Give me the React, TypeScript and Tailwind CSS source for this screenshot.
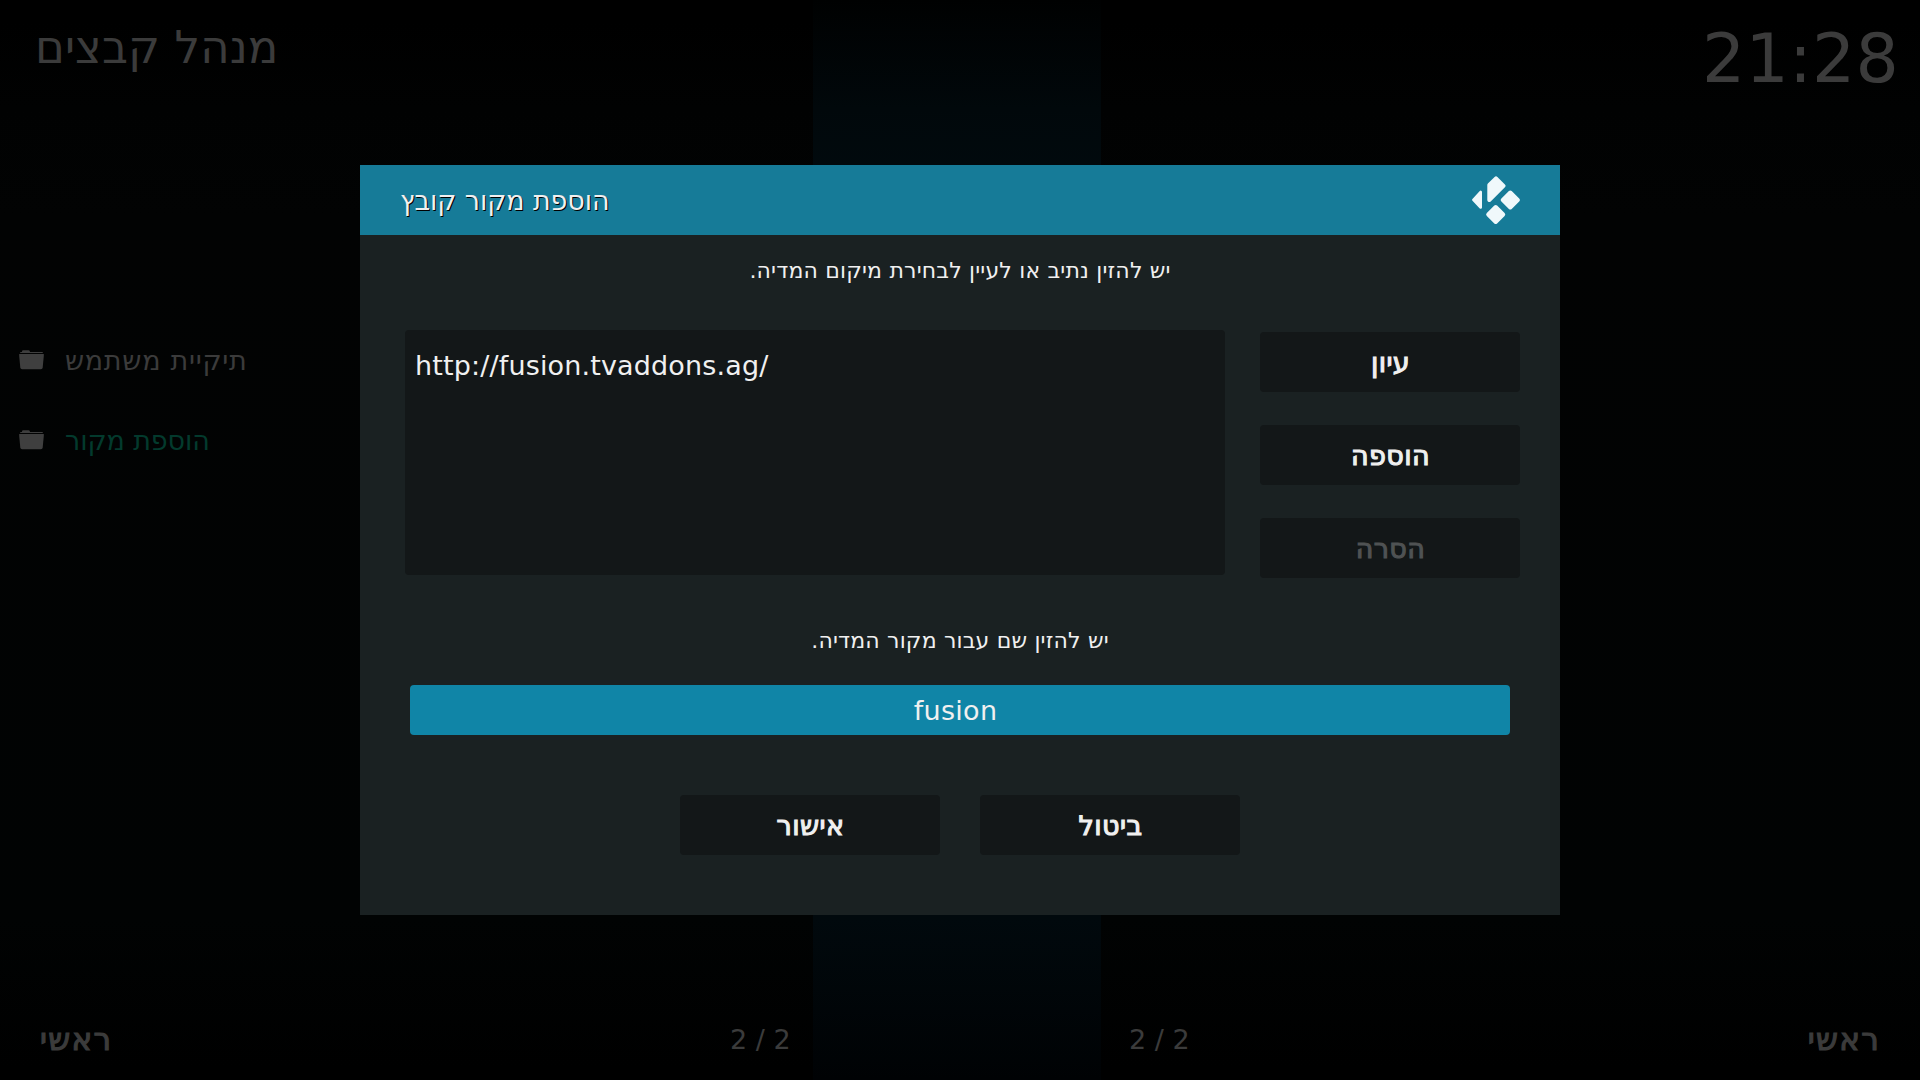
import type { ReactNode } from "react";

function Folder() {
  return (
    <svg width="25" height="20" viewBox="0 0 25 20" fill="#3f3f3f" className="shrink-0">
      <path d="M3 1.600Q3 .3 4.300 .3H9.500Q10.600 .3 10.900 1.600L11 2.100H23Q24 2.100 24 3H1Q1 2.100 2 2.100H3Z" />
      <path d="M.2 4H24.800V6L23.700 17.600Q23.500 19.200 22 19.200H3Q1.500 19.200 1.300 17.600L.2 6Z" />
    </svg>
  );
}

function KodiLogo() {
  return (
    <svg width="48" height="49" viewBox="0 0.5 48 49" fill="#f0f8fb" stroke="#f0f8fb" strokeWidth="4" strokeLinejoin="round" className="shrink-0">
      <path d="M24 2.800L31.500 10.300L17.300 24.500V9.500Z" />
      <path d="M38.300 17L45.800 24.500L38.300 32L30.800 24.500Z" />
      <path d="M23.700 31.500L31.200 39L23.700 46.500L16.200 39Z" />
      <path d="M8.700 16.500V32L1.400 24.300Z" strokeWidth="2.600" />
    </svg>
  );
}

function Button({ children, disabled }: { children: ReactNode; disabled?: boolean }) {
  return (
    <button
      dir="rtl"
      className={
        "flex h-[60px] w-[260px] items-center justify-center rounded bg-[#131718] pl-px text-[27px] tracking-[0.4px] [-webkit-text-stroke:1.1px] " +
        (disabled ? "text-[#4f5253]" : "text-[#f0f0f0]")
      }
    >
      {children}
    </button>
  );
}

export default function App() {
  return (
    <div className="relative h-[1080px] w-[1920px] overflow-hidden bg-black bg-[linear-gradient(to_bottom,#000000_2%,#010202_10%,#020303_20%,#010303_85%,#000000_99%)] font-['DejaVu_Sans',sans-serif] leading-none whitespace-nowrap text-[#3b3b3b]">
      <div className="absolute top-0 left-[813px] h-full w-[288px] bg-[linear-gradient(to_bottom,#000101_0%,#01080b_10%,#010b0f_20%,#01090d_85%,#000204_100%)]" />

      <div className="relative flex h-full flex-col justify-between">
        <header className="flex h-[119px] items-center justify-between pr-[21px] pl-[35px]">
          <h1 dir="rtl" className="mb-[24px] text-[45px] tracking-[0.1px]">מנהל קבצים</h1>
          <time className="mb-[2px] text-[68px] tracking-[0.2px]">21:28</time>
        </header>

        <ul className="mt-[201px] w-[360px] flex-1 text-[27px]">
          <li className="flex h-20 items-center gap-[21px] pl-[19px]">
            <Folder />
            <span dir="rtl" className="tracking-[0.7px]">תיקיית משתמש</span>
          </li>
          <li className="flex h-20 items-center gap-[21px] pl-[19px]">
            <Folder />
            <span dir="rtl" className="tracking-[-0.1px] text-[#033a2d]">הוספת מקור</span>
          </li>
        </ul>

        <footer className="flex h-20 items-center px-10 pb-[2px]">
          <span dir="rtl" className="w-[690px] text-left text-[31px] tracking-[1.3px] [-webkit-text-stroke:1.2px]">ראשי</span>
          <span className="w-[399px] text-[27px]">2 / 2</span>
          <span className="text-[27px]">2 / 2</span>
          <span dir="rtl" className="flex-1 text-[31px] tracking-[1.3px] [-webkit-text-stroke:1.2px]">ראשי</span>
        </footer>
      </div>

      <section className="absolute top-[165px] left-[360px] flex h-[750px] w-[1200px] flex-col bg-[#1a2122] text-[#f0f0f0]">
        <header className="flex h-[70px] shrink-0 items-center justify-between bg-[#167b98] px-10">
          <h2 dir="rtl" className="text-[27px] tracking-[-0.1px] [text-shadow:1px_1px_0_#000]">הוספת מקור קובץ</h2>
          <KodiLogo />
        </header>
        <p dir="rtl" className="flex h-[71px] items-center justify-center text-[22px] tracking-[0.18px]">
          יש להזין נתיב או לעיין לבחירת מיקום המדיה.
        </p>
        <div className="mt-6 flex gap-[35px] pl-[45px]">
          <div className="h-[245px] w-[820px] rounded bg-[#131718] px-[10px] pt-[22px] text-[27px] tracking-[0.15px]">http://fusion.tvaddons.ag/</div>
          <div className="flex flex-col gap-[33px] pt-[2px]">
            <Button>עיון</Button>
            <Button>הוספה</Button>
            <Button disabled>הסרה</Button>
          </div>
        </div>
        <p dir="rtl" className="mt-[28px] flex h-[70px] items-center justify-center text-[22px] tracking-[0.18px]">
          יש להזין שם עבור מקור המדיה.
        </p>
        <div className="mx-[50px] mt-[9px] flex h-[50px] shrink-0 items-center justify-center rounded bg-[#1085a7] pr-[9px] text-[27px] tracking-[0.3px]">fusion</div>
        <div className="mt-[60px] flex justify-center gap-10">
          <Button>אישור</Button>
          <Button>ביטול</Button>
        </div>
      </section>
    </div>
  );
}
